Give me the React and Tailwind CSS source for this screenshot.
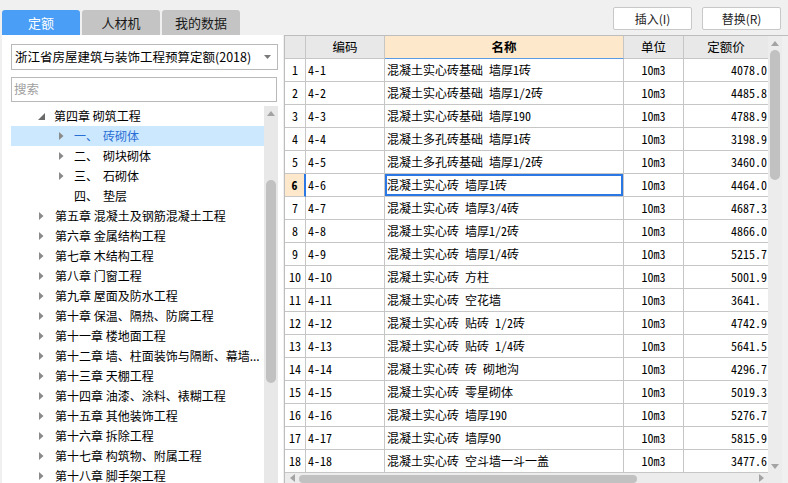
import React from "react";

const rows = [
  ["4-1", "混凝土实心砖基础 墙厚1砖", "4078.0"],
  ["4-2", "混凝土实心砖基础 墙厚1/2砖", "4485.8"],
  ["4-3", "混凝土实心砖基础 墙厚190", "4788.9"],
  ["4-4", "混凝土多孔砖基础 墙厚1砖", "3198.9"],
  ["4-5", "混凝土多孔砖基础 墙厚1/2砖", "3460.0"],
  ["4-6", "混凝土实心砖 墙厚1砖", "4464.0"],
  ["4-7", "混凝土实心砖 墙厚3/4砖", "4687.3"],
  ["4-8", "混凝土实心砖 墙厚1/2砖", "4866.0"],
  ["4-9", "混凝土实心砖 墙厚1/4砖", "5215.7"],
  ["4-10", "混凝土实心砖 方柱", "5001.9"],
  ["4-11", "混凝土实心砖 空花墙", "3641.\u00a0"],
  ["4-12", "混凝土实心砖 贴砖 1/2砖", "4742.9"],
  ["4-13", "混凝土实心砖 贴砖 1/4砖", "5641.5"],
  ["4-14", "混凝土实心砖 砖 砌地沟", "4296.7"],
  ["4-15", "混凝土实心砖 零星砌体", "5019.3"],
  ["4-16", "混凝土实心砖 墙厚190", "5276.7"],
  ["4-17", "混凝土实心砖 墙厚90", "5815.9"],
  ["4-18", "混凝土实心砖 空斗墙一斗一盖", "3477.6"],
];

const chapters = [
  "第五章 混凝土及钢筋混凝土工程",
  "第六章 金属结构工程",
  "第七章 木结构工程",
  "第八章 门窗工程",
  "第九章 屋面及防水工程",
  "第十章 保温、隔热、防腐工程",
  "第十一章 楼地面工程",
  "第十二章 墙、柱面装饰与隔断、幕墙...",
  "第十三章 天棚工程",
  "第十四章 油漆、涂料、裱糊工程",
  "第十五章 其他装饰工程",
  "第十六章 拆除工程",
  "第十七章 构筑物、附属工程",
  "第十八章 脚手架工程",
];

const cjk = { fontFamily: '"Noto Sans CJK SC", "Microsoft YaHei", sans-serif' };
const mono = {
  fontFamily: '"Noto Sans Mono CJK SC", "Noto Sans CJK SC", "Liberation Mono", monospace',
};

function ArrowRight({ color = "#8a8a8a" }) {
  return (
    <svg width="5" height="8" viewBox="0 0 5 8" className="shrink-0">
      <polygon points="0,0 4.5,4 0,8" fill={color} />
    </svg>
  );
}

function ArrowExpanded() {
  return (
    <svg width="7" height="7" viewBox="0 0 7 7" className="shrink-0">
      <polygon points="7,0 7,7 0,7" fill="#6a6a6a" />
    </svg>
  );
}

function ScrollTri({ dir }) {
  const pts = {
    up: "0,5 4,0 8,5",
    down: "0,0 8,0 4,5",
    left: "5,0 5,8 0,4",
    right: "0,0 5,4 0,8",
  }[dir];
  const w = dir === "up" || dir === "down" ? 8 : 5;
  const h = dir === "up" || dir === "down" ? 5 : 8;
  return (
    <svg width={w} height={h} viewBox={`0 0 ${w} ${h}`}>
      <polygon points={pts} fill="#a3a3a3" />
    </svg>
  );
}

export default function App() {
  return (
    <div
      className="w-[788px] h-[483px] bg-[#f0f0f0] flex overflow-hidden text-black"
      style={cjk}
    >
      {/* Left column */}
      <div className="w-[283px] flex flex-col pl-[2px]">
        <div className="h-[35px] flex items-end gap-[2px] text-[13px]">
          <div className="w-[78px] h-[25px] rounded-t-[3px] bg-[#4a9ef5] text-white flex items-center justify-center">
            定额
          </div>
          <div className="w-[78px] h-[25px] rounded-t-[3px] bg-[#c4c4c4] flex items-center justify-center text-[#1a1a1a]">
            人材机
          </div>
          <div className="w-[78px] h-[25px] rounded-t-[3px] bg-[#c4c4c4] flex items-center justify-center text-[#1a1a1a]">
            我的数据
          </div>
        </div>
        <div className="flex-1 bg-white flex flex-col min-h-0">
          <div className="ml-[9px] mt-[9px] w-[267px] h-[26px] border border-[#b9b9b9] flex items-center pl-[3px] pr-[6px] text-[12.5px]">
            <span className="flex-1 whitespace-nowrap">浙江省房屋建筑与装饰工程预算定额(2018)</span>
            <svg width="7" height="4" viewBox="0 0 7 4">
              <polygon points="0,0 7,0 3.5,4" fill="#7a7a7a" />
            </svg>
          </div>
          <div className="ml-[9px] mt-[7px] w-[266px] h-[25px] border border-[#b9b9b9] flex items-center pl-[2px] text-[12.5px] text-[#a0a0a0]">
            搜索
          </div>
          <div className="flex mt-[4px] flex-1 min-h-0">
            <div className="ml-[9px] w-[253px] flex flex-col text-[12px] overflow-hidden">
              <div className="h-[20px] flex items-center pl-[27px] shrink-0">
                <ArrowExpanded />
                <span className="ml-[9px] whitespace-pre">第四章 砌筑工程</span>
              </div>
              <div className="h-[20px] flex items-center pl-[48px] bg-[#cce8ff] shrink-0 text-[#2a6fd4]">
                <ArrowRight />
                <span className="ml-[10px] w-[29px]">一、</span>
                <span>砖砌体</span>
              </div>
              <div className="h-[20px] flex items-center pl-[48px] shrink-0">
                <ArrowRight />
                <span className="ml-[10px] w-[29px]">二、</span>
                <span>砌块砌体</span>
              </div>
              <div className="h-[20px] flex items-center pl-[48px] shrink-0">
                <ArrowRight />
                <span className="ml-[10px] w-[29px]">三、</span>
                <span>石砌体</span>
              </div>
              <div className="h-[20px] flex items-center pl-[63px] shrink-0">
                <span className="w-[29px]">四、</span>
                <span>垫层</span>
              </div>
              {chapters.map((c) => (
                <div key={c} className="h-[20px] flex items-center pl-[28px] shrink-0">
                  <ArrowRight />
                  <span className="ml-[11px] whitespace-pre">{c}</span>
                </div>
              ))}
            </div>
            <div className="w-[14px] bg-[#e8e8e8] flex flex-col items-center">
              <div className="h-[12px] flex items-center pt-[2px]">
                <ScrollTri dir="up" />
              </div>
              <div className="mt-[62px] w-[10px] h-[203px] rounded-[5px] bg-[#c1c1c1]" />
            </div>
          </div>
        </div>
      </div>

      {/* Right column */}
      <div className="flex-1 flex flex-col">
        <div className="h-[35px] flex justify-end items-start pt-[7px] gap-[10px] pr-[7px] text-[12px]">
          <div className="w-[79px] h-[23px] bg-white border border-[#c8c8c8] rounded-[2px] flex items-center justify-center text-[#222]">
            插入(I)
          </div>
          <div className="w-[79px] h-[23px] bg-white border border-[#c8c8c8] rounded-[2px] flex items-center justify-center text-[#222]">
            替换(R)
          </div>
        </div>
        <div className="ml-[1px] flex-1 flex flex-col border-l border-t border-[#bdbdbd] min-h-0">
          <div className="flex flex-1 min-h-0">
            <div className="w-[483px] flex flex-col bg-white">
              {/* header */}
              <div className="grid grid-cols-[21px_79px_239px_60px_84px] h-[23px] text-[12.5px]">
                <div className="bg-[#e8e8e8] border-r border-b border-[#c6c6c6]" />
                <div className="bg-[#e8e8e8] border-r border-b border-[#c6c6c6] flex items-center justify-center">编码</div>
                <div className="bg-[#fde8cc] border-r border-[#c6c6c6] border-b border-b-[#5b9be6] flex items-center justify-center font-bold">名称</div>
                <div className="bg-[#e8e8e8] border-r border-b border-[#c6c6c6] flex items-center justify-center">单位</div>
                <div className="bg-[#e8e8e8] border-b border-[#c6c6c6] flex items-center justify-center">定额价</div>
              </div>
              {rows.map((r, i) => {
                const sel = i === 5;
                return (
                  <div
                    key={r[0]}
                    className="grid grid-cols-[21px_79px_239px_60px_84px] h-[23px] text-[12px]"
                    style={mono}
                  >
                    <div
                      className={
                        sel
                          ? "bg-[#fde8cc] border-b border-[#c6c6c6] border-r-2 border-r-[#2b78e4] flex items-center justify-center font-bold"
                          : "border-r border-b border-[#c6c6c6] flex items-center justify-center"
                      }
                    >
                      {i + 1}
                    </div>
                    <div className="border-r border-b border-[#c6c6c6] flex items-center pl-[2px]">{r[0]}</div>
                    <div
                      className={
                        "border-r border-b border-[#c6c6c6] flex items-center pl-[2px] whitespace-pre" +
                        (sel ? " shadow-[inset_0_0_0_2px_#2b78e4]" : "")
                      }
                    >
                      {r[1]}
                    </div>
                    <div className="border-r border-b border-[#c6c6c6] flex items-center justify-center">10m3</div>
                    <div className="border-b border-[#c6c6c6] flex items-center justify-end whitespace-pre pr-[1px]">{r[2]}</div>
                  </div>
                );
              })}
            </div>
            <div className="w-[14px] bg-[#ececec] flex flex-col items-center">
              <div className="h-[12px] flex items-center pt-[2px]">
                <ScrollTri dir="up" />
              </div>
              <div className="mt-[2px] w-[10px] h-[130px] rounded-[5px] bg-[#c1c1c1]" />
              <div className="flex-1" />
              <div className="h-[12px] flex items-center pb-[2px]">
                <ScrollTri dir="down" />
              </div>
            </div>
          </div>
          <div className="h-[10px] flex">
            <div className="w-[483px] bg-[#ececec] flex items-center">
              <div className="w-[14px] flex justify-center">
                <ScrollTri dir="left" />
              </div>
              <div className="w-[338px] h-[8px] rounded-[4px] bg-[#c1c1c1] mt-[2px]" />
              <div className="flex-1" />
              <div className="w-[14px] flex justify-center">
                <ScrollTri dir="right" />
              </div>
            </div>
            <div className="w-[14px] bg-[#ececec]" />
          </div>
        </div>
      </div>
    </div>
  );
}
